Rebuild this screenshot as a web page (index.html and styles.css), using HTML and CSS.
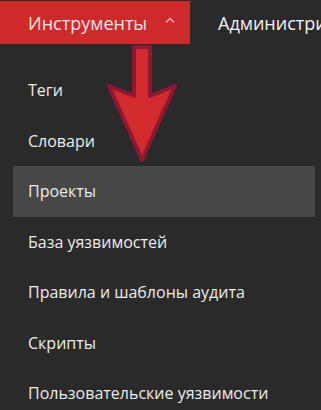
FILE: index.html
```html
<!DOCTYPE html>
<html lang="ru">
<head>
<meta charset="utf-8">
<link rel="stylesheet" href="styles.css">
</head>
<body>
<div class="page">
  <nav class="topbar">
    <div class="tab active">
      <span class="tab-label">Инструменты</span>
      <svg class="caret" width="10" height="6" viewBox="0 0 10 6"><path d="M1 5.5 L5 1.5 L9 5.5" fill="none" stroke="#e9a3a3" stroke-width="1.6"/></svg>
    </div>
    <div class="tab">Администри</div>
  </nav>
  <ul class="menu">
    <li class="item">Теги</li>
    <li class="item">Словари</li>
    <li class="item selected">Проекты</li>
    <li class="item">База уязвимостей</li>
    <li class="item">Правила и шаблоны аудита</li>
    <li class="item">Скрипты</li>
    <li class="item">Пользовательские уязвимости</li>
  </ul>
  <svg class="arrow" width="80" height="120" viewBox="0 0 80 120">
    <path d="M28 3 H44 V52 L69 42 L36 116 L3 42 L28 52 Z" fill="#d22a2d" stroke="#8e1732" stroke-width="4" stroke-linejoin="round"/>
  </svg>
</div>
</body>
</html>
```
FILE: styles.css
```css
html, body {
  margin: 0;
  padding: 0;
  background: #2a2a2a;
}
.page {
  position: relative;
  width: 321px;
  height: 410px;
  overflow: hidden;
  font-family: "Open Sans", "Noto Sans", sans-serif;
  font-size: 16px;
  color: #ececec;
}
.topbar {
  display: flex;
  align-items: stretch;
  height: 43px;
  margin-top: 1px;
  white-space: nowrap;
}
.tab {
  flex: none;
  display: flex;
  align-items: center;
  padding-left: 28px;
  font-size: 18px;
  color: #f4f4f4;
}
.tab.active {
  width: 162px;
  background: #cf2a2b;
  color: #f6e9e9;
}
.tab-label {
  flex: none;
}
.caret {
  margin-left: 18px;
  margin-top: -6px;
}
.menu {
  list-style: none;
  margin: 0;
  padding: 21px 6px 0 13px;
}
.item {
  height: 50.5px;
  display: flex;
  align-items: center;
  padding-left: 15px;
  white-space: nowrap;
}
.item.selected {
  background: #474747;
}
.arrow {
  position: absolute;
  left: 106px;
  top: 44px;
}
```
